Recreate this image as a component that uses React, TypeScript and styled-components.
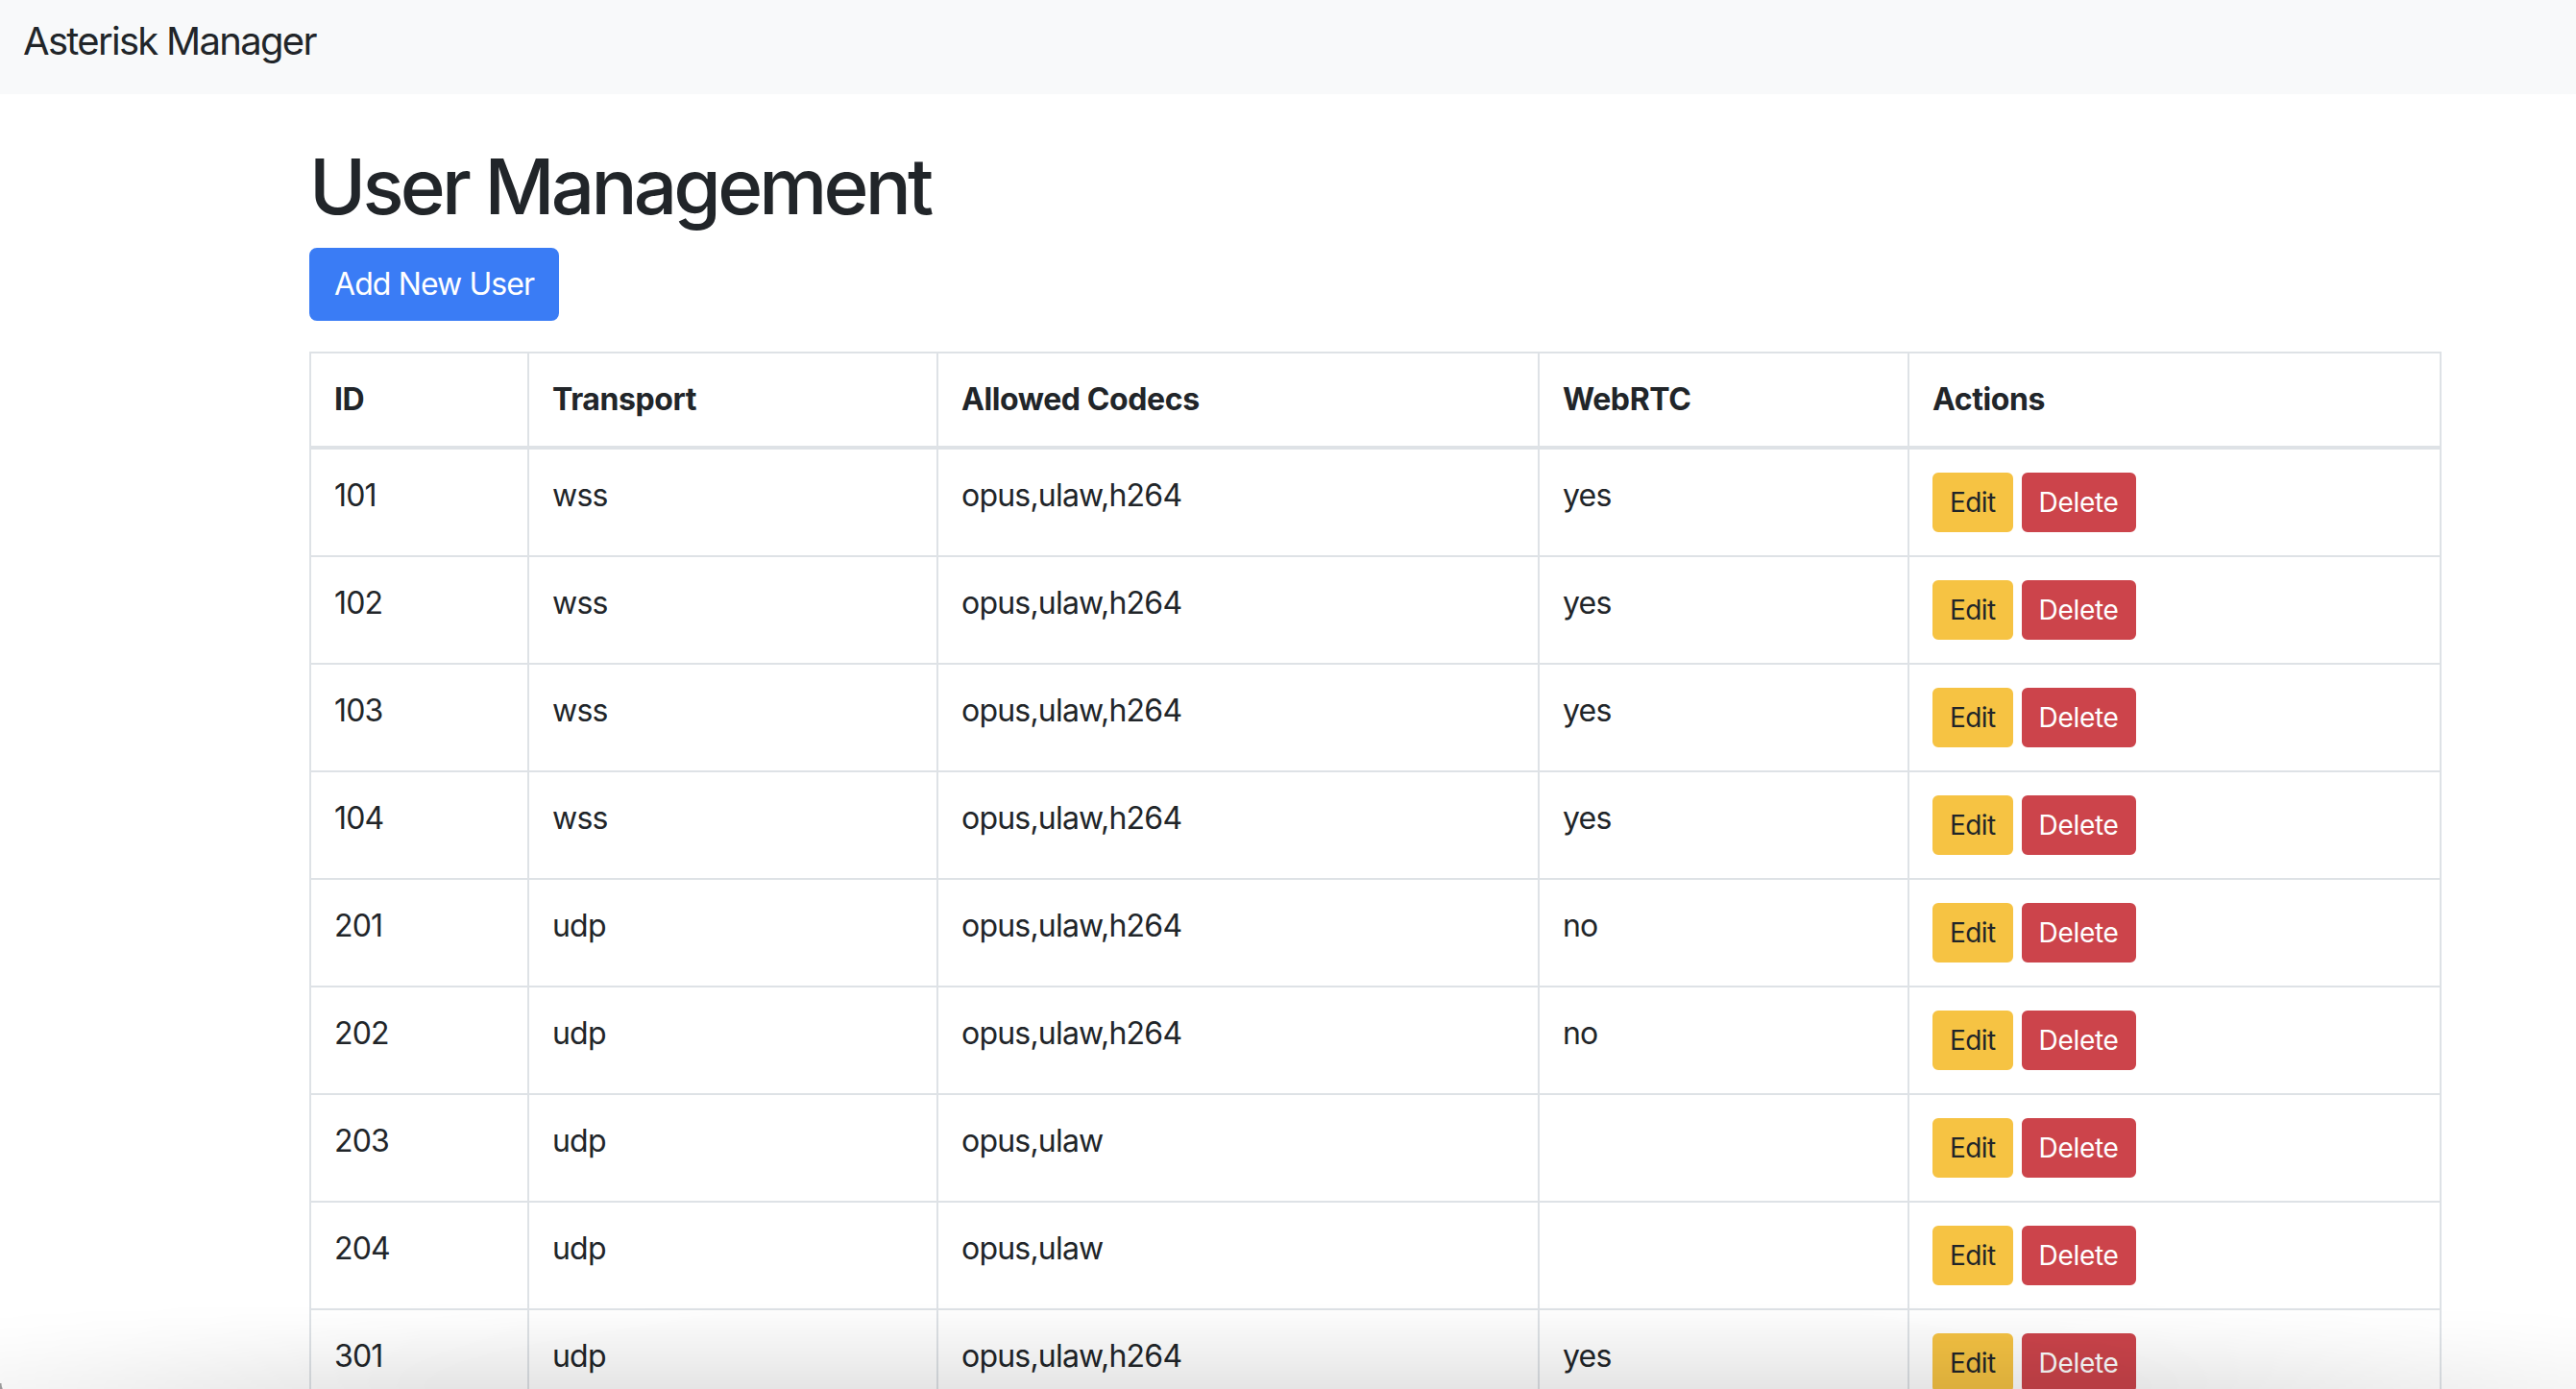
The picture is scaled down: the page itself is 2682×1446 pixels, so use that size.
import React from "react";
import styled, { createGlobalStyle } from "styled-components";

const GlobalStyle = createGlobalStyle`
  html, body {
    margin: 0;
    padding: 0;
    background: #ffffff;
  }
  body {
    font-family: Inter, "Liberation Sans", Arial, sans-serif;
    color: #212529;
    font-size: 32px;
    line-height: 1.5;
    overflow: hidden;
  }
  * { box-sizing: border-box; }
`;

const Navbar = styled.nav`
  height: 98px;
  background: #f8f9fa;
  padding: 13px 24px 0;
`;

const Brand = styled.a`
  display: inline-block;
  font-size: 40px;
  line-height: 60px;
  color: #212529;
  text-decoration: none;
  letter-spacing: -1.7px;
`;

const Main = styled.main`
  padding: 48px 0 0 322px;
`;

const Container = styled.div`
  width: 2220px;
`;

const Title = styled.h1`
  margin: 0 0 16px;
  font-size: 80px;
  font-weight: 500;
  line-height: 1.2;
  letter-spacing: -3.8px;
`;

const PrimaryButton = styled.button`
  display: inline-block;
  height: 76px;
  padding: 12px 24px;
  border: 2px solid #3a7cf5;
  border-radius: 8px;
  background: #3a7cf5;
  color: #ffffff;
  font-family: inherit;
  font-size: 32px;
  line-height: 48px;
  letter-spacing: -0.9px;
  margin-bottom: 32px;
  cursor: pointer;
`;

const Table = styled.table`
  width: 2220px;
  border-collapse: collapse;
  table-layout: fixed;
  border: 2px solid #dee2e6;
`;

const HeadCell = styled.th<{ $w: number }>`
  width: ${(p) => p.$w}px;
  padding: 24px;
  text-align: left;
  vertical-align: bottom;
  font-weight: 700;
  line-height: 48px;
  border: 2px solid #dee2e6;
  border-bottom-width: 4px;
  letter-spacing: -0.4px;
`;

const Cell = styled.td`
  padding: 24px;
  vertical-align: top;
  line-height: 48px;
  border: 2px solid #dee2e6;
  letter-spacing: -0.8px;
  white-space: nowrap;
`;

const ActionButton = styled.button<{ $variant: "edit" | "delete" }>`
  display: inline-block;
  height: 62px;
  padding: 8px 16px;
  margin-right: 9px;
  border-radius: 6px;
  border: 2px solid ${(p) => (p.$variant === "edit" ? "#f6c343" : "#cc444b")};
  background: ${(p) => (p.$variant === "edit" ? "#f6c343" : "#cc444b")};
  color: ${(p) => (p.$variant === "edit" ? "#212529" : "#ffffff")};
  font-family: inherit;
  font-size: 28px;
  line-height: 42px;
  letter-spacing: ${(p) => (p.$variant === "edit" ? "-0.6px" : "-0.3px")};
  vertical-align: top;
  cursor: pointer;
`;

const BottomShade = styled.div`
  position: fixed;
  left: 0;
  right: 0;
  bottom: 0;
  height: 90px;
  pointer-events: none;
  background: linear-gradient(to bottom, rgba(0, 0, 0, 0) 0%, rgba(0, 0, 0, 0.1) 100%);
  -webkit-mask-image: radial-gradient(ellipse 60% 180% at 50% 100%, #000 55%, transparent 100%);
  mask-image: radial-gradient(ellipse 60% 180% at 50% 100%, #000 55%, transparent 100%);
`;

const Corner = styled.div`
  position: fixed;
  left: 0;
  bottom: 0;
  width: 16px;
  height: 6px;
  background: radial-gradient(circle at 100% 0%, transparent 14px, #9a9a9a 15px);
  pointer-events: none;
`;

type User = { id: string; transport: string; codecs: string; webrtc: string };

const users: User[] = [
  { id: "101", transport: "wss", codecs: "opus,ulaw,h264", webrtc: "yes" },
  { id: "102", transport: "wss", codecs: "opus,ulaw,h264", webrtc: "yes" },
  { id: "103", transport: "wss", codecs: "opus,ulaw,h264", webrtc: "yes" },
  { id: "104", transport: "wss", codecs: "opus,ulaw,h264", webrtc: "yes" },
  { id: "201", transport: "udp", codecs: "opus,ulaw,h264", webrtc: "no" },
  { id: "202", transport: "udp", codecs: "opus,ulaw,h264", webrtc: "no" },
  { id: "203", transport: "udp", codecs: "opus,ulaw", webrtc: "" },
  { id: "204", transport: "udp", codecs: "opus,ulaw", webrtc: "" },
  { id: "301", transport: "udp", codecs: "opus,ulaw,h264", webrtc: "yes" },
];

const columns: { label: string; width: number }[] = [
  { label: "ID", width: 227 },
  { label: "Transport", width: 426 },
  { label: "Allowed Codecs", width: 626 },
  { label: "WebRTC", width: 385 },
  { label: "Actions", width: 554 },
];

export default function App() {
  return (
    <>
      <GlobalStyle />
      <Navbar>
        <Brand href="#">Asterisk Manager</Brand>
      </Navbar>
      <Main>
        <Container>
          <Title>User Management</Title>
          <PrimaryButton>Add New User</PrimaryButton>
          <Table>
            <thead>
              <tr>
                {columns.map((c) => (
                  <HeadCell key={c.label} $w={c.width}>
                    {c.label}
                  </HeadCell>
                ))}
              </tr>
            </thead>
            <tbody>
              {users.map((u) => (
                <tr key={u.id}>
                  <Cell>{u.id}</Cell>
                  <Cell>{u.transport}</Cell>
                  <Cell>{u.codecs}</Cell>
                  <Cell>{u.webrtc}</Cell>
                  <Cell>
                    <ActionButton $variant="edit">Edit</ActionButton>
                    <ActionButton $variant="delete">Delete</ActionButton>
                  </Cell>
                </tr>
              ))}
            </tbody>
          </Table>
        </Container>
      </Main>
      <BottomShade />
      <Corner />
    </>
  );
}
